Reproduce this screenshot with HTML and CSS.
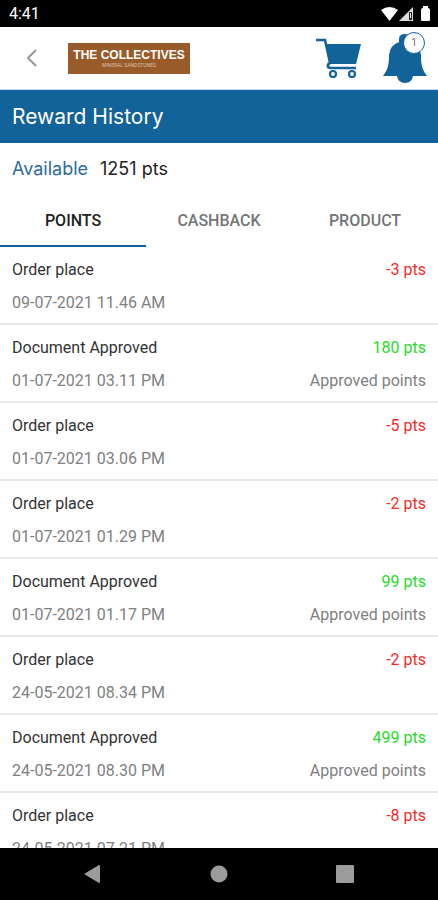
FILE: index.html
```html
<!DOCTYPE html>
<html lang="en">
<head>
  <meta charset="UTF-8">
  <meta name="viewport" content="width=device-width, initial-scale=1.0">
  <title>Reward History</title>
  <link rel="stylesheet" href="styles.css">
</head>
<body>
  <div class="status-bar">
    <span>4:41</span>
    <div class="status-icons">
      <svg width="17" height="14" viewBox="0 0 17 14"><path d="M0 3Q8.500 -3 17 3L8.500 14Z" fill="#fff"/></svg>
      <svg width="14" height="14" viewBox="0 0 14 14"><path d="M0 14L14 0V14Z" fill="#ddd"/><path d="M10 5h3v8h-3z" fill="#222"/><path d="M11 6h1v5h-1z" fill="#fff"/></svg>
      <svg class="battery" width="9" height="15" viewBox="0 0 9 15"><path d="M0 4Q0 2 2 2V0H7V2Q9 2 9 4V14Q9 15 8 15H1Q0 15 0 14Z" fill="#fff"/></svg>
    </div>
  </div>

  <header class="top-bar">
    <button class="icon-btn back" aria-label="Back">
      <svg width="12" height="18" viewBox="0 0 12 18"><path d="M10 1L2 9L10 17" fill="none" stroke="#999" stroke-width="2"/></svg>
    </button>
    <a href="#" class="logo">
      <span class="logo-name">THE COLLECTIVES</span>
      <span class="logo-sub">MINERAL SANDSTONES</span>
    </a>
    <button class="icon-btn cart" aria-label="Cart">
      <svg width="46" height="40" viewBox="0 0 46 40">
        <path d="M10 6H45L40 26H14Z" fill="#13639b"/>
        <path d="M0 2H9L14 25Q11 26 12 29Q13 30 15 30H40" fill="none" stroke="#13639b" stroke-width="2.500"/>
        <circle cx="17" cy="36" r="3" fill="none" stroke="#13639b" stroke-width="2.200"/>
        <circle cx="36" cy="36" r="3" fill="none" stroke="#13639b" stroke-width="2.200"/>
      </svg>
    </button>
    <button class="icon-btn bell" aria-label="Notifications">
      <svg width="46" height="52" viewBox="0 0 46 52">
        <path d="M17 10V7Q17 2 23 2T29 7V10Q38 13 39 23C39 33 40 37 45 44H31Q30 51 23 51T15 44H1C6 37 7 33 7 23Q8 13 17 10Z" fill="#13639b"/>
      </svg>
      <span class="badge">1</span>
    </button>
  </header>

  <h1 class="page-title">Reward History</h1>

  <p class="available"><span class="available-label">Available</span><span>1251 pts</span></p>

  <nav class="tabs">
    <button class="tab active">POINTS</button>
    <button class="tab">CASHBACK</button>
    <button class="tab">PRODUCT</button>
  </nav>

  <main class="history">
    <div class="entry">
      <div class="entry-row"><span class="entry-title">Order place</span><span class="minus">-3 pts</span></div>
      <div class="entry-row"><span>09-07-2021 11.46 AM</span></div>
    </div>
    <div class="entry">
      <div class="entry-row"><span class="entry-title">Document Approved</span><span class="plus">180 pts</span></div>
      <div class="entry-row"><span>01-07-2021 03.11 PM</span><span>Approved points</span></div>
    </div>
    <div class="entry">
      <div class="entry-row"><span class="entry-title">Order place</span><span class="minus">-5 pts</span></div>
      <div class="entry-row"><span>01-07-2021 03.06 PM</span></div>
    </div>
    <div class="entry">
      <div class="entry-row"><span class="entry-title">Order place</span><span class="minus">-2 pts</span></div>
      <div class="entry-row"><span>01-07-2021 01.29 PM</span></div>
    </div>
    <div class="entry">
      <div class="entry-row"><span class="entry-title">Document Approved</span><span class="plus">99 pts</span></div>
      <div class="entry-row"><span>01-07-2021 01.17 PM</span><span>Approved points</span></div>
    </div>
    <div class="entry">
      <div class="entry-row"><span class="entry-title">Order place</span><span class="minus">-2 pts</span></div>
      <div class="entry-row"><span>24-05-2021 08.34 PM</span></div>
    </div>
    <div class="entry">
      <div class="entry-row"><span class="entry-title">Document Approved</span><span class="plus">499 pts</span></div>
      <div class="entry-row"><span>24-05-2021 08.30 PM</span><span>Approved points</span></div>
    </div>
    <div class="entry">
      <div class="entry-row"><span class="entry-title">Order place</span><span class="minus">-8 pts</span></div>
      <div class="entry-row"><span>24-05-2021 07.21 PM</span></div>
    </div>
  </main>

  <footer class="nav-bar">
    <button class="icon-btn" aria-label="Back"><svg width="18" height="18" viewBox="0 0 18 18"><path d="M0 9L15 0Q16 0 16 1V17Q16 18 15 18Z" fill="#9b9b9b"/></svg></button>
    <button class="icon-btn" aria-label="Home"><svg width="18" height="18" viewBox="0 0 18 18"><circle cx="9" cy="9" r="8.500" fill="#9b9b9b"/></svg></button>
    <button class="icon-btn" aria-label="Recent apps"><svg width="18" height="18" viewBox="0 0 18 18"><rect width="18" height="18" rx="1" fill="#9b9b9b"/></svg></button>
  </footer>
</body>
</html>
```
FILE: styles.css
```css
* {
  box-sizing: border-box;
}

body {
  margin: 0;
  height: 100vh;
  display: flex;
  flex-direction: column;
  overflow: hidden;
  background-color: #fff;
  color: #808080;
  font-family: Roboto, sans-serif;
  font-size: 16px;
}

button {
  font-family: inherit;
  border: none;
  background: none;
  padding: 0;
  cursor: pointer;
}

.icon-btn {
  display: flex;
}

.status-bar {
  flex: none;
  height: 27px;
  padding: 0 8px 0 9px;
  display: flex;
  align-items: center;
  justify-content: space-between;
  background-color: #000;
  color: #fff;
}

.status-icons {
  display: flex;
  align-items: center;
  gap: 1px;
}

.battery {
  margin-left: 7px;
}

.top-bar {
  flex: none;
  height: 63px;
  padding: 0 10px 0 26px;
  display: flex;
  align-items: center;
  border-bottom: 1px solid #cdd3ea;
}

.logo {
  display: flex;
  flex-direction: column;
  align-items: center;
  justify-content: center;
  width: 122px;
  height: 31px;
  margin-left: 30px;
  background-color: #9a5b2a;
  color: #fff;
  text-decoration: none;
}

.logo-name {
  font-family: "Liberation Sans", sans-serif;
  font-size: 12px;
  line-height: 14px;
  font-weight: 700;
}

.logo-sub {
  font-size: 5px;
  line-height: 6px;
  color: #dcbfa5;
}

.cart {
  margin-left: auto;
}

.bell {
  position: relative;
  margin-left: 20px;
}

.badge {
  position: absolute;
  top: 0;
  right: 3px;
  width: 22px;
  height: 22px;
  border: 1px solid #13639b;
  border-radius: 50%;
  background-color: #fff;
  color: #777;
  font-size: 11px;
  line-height: 20px;
  text-align: center;
}

.page-title {
  flex: none;
  margin: 0;
  padding: 0 12px;
  background-color: #13639b;
  color: #fff;
  font-family: Inter, sans-serif;
  font-size: 21px;
  font-weight: 400;
  line-height: 53px;
}

.available {
  flex: none;
  display: flex;
  gap: 12px;
  margin: 0;
  padding: 0 12px;
  color: #222;
  font-family: Inter, sans-serif;
  font-size: 18px;
  line-height: 52px;
}

.available-label {
  color: #2a6ba3;
}

.tabs {
  flex: none;
  display: flex;
}

.tab {
  flex: 1;
  height: 52px;
  border-bottom: 2px solid transparent;
  color: #757575;
  font-size: 16px;
  font-weight: 500;
}

.tab.active {
  border-bottom-color: #13639b;
  color: #222;
}

.history {
  flex: 1;
  min-height: 0;
  overflow: hidden;
}

.entry {
  padding: 6px 12px 4px;
  border-bottom: 2px solid #e8e8e8;
}

.entry-row {
  display: flex;
  justify-content: space-between;
  line-height: 33px;
}

.entry-title {
  color: #333;
}

.minus {
  color: #f42a2a;
}

.plus {
  color: #1fdc2c;
}

.nav-bar {
  flex: none;
  height: 52px;
  padding: 0 84px;
  display: flex;
  align-items: center;
  justify-content: space-between;
  background-color: #000;
}
```
